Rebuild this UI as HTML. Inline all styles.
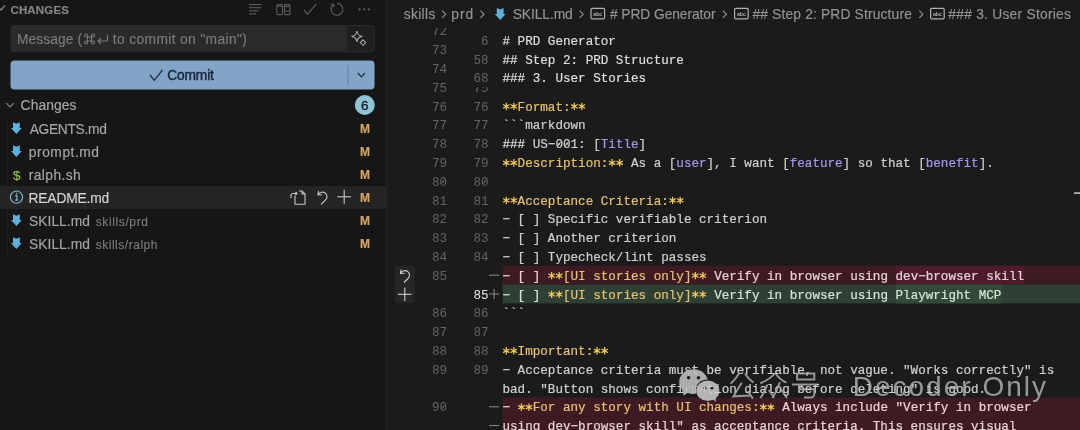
<!DOCTYPE html>
<html><head><meta charset="utf-8"><style>
*{margin:0;padding:0;box-sizing:border-box}
html,body{width:1080px;height:430px;overflow:hidden;background:#1b1b1b}
body{position:relative;font-family:"Liberation Sans",sans-serif}
.a{position:absolute}
svg{position:absolute;left:0;top:0;overflow:visible}
svg text{font-family:"Liberation Sans",sans-serif;white-space:pre}
svg text.m{font-family:"Liberation Mono",monospace;font-size:12.6px}
</style></head><body>

<svg width="1080" height="430">
<defs><clipPath id="cc"><rect x="387" y="28" width="693" height="402"/></clipPath></defs>
<rect x="0" y="0" width="386" height="430" fill="#161616"/>
<rect x="386" y="0" width="1" height="430" fill="#252525"/>
<polyline points="-3,5.5 1,10 5,5.5" fill="none" stroke="#8a8a8a" stroke-width="1.2"/>
<g stroke="#5e5e5e" stroke-width="1.1"><line x1="249" y1="4.6" x2="261.5" y2="4.6"/><line x1="249" y1="7.7" x2="261.5" y2="7.7"/><line x1="249" y1="10.8" x2="258.5" y2="10.8"/><line x1="249" y1="13.9" x2="256" y2="13.9"/></g>
<g fill="none" stroke="#5e5e5e" stroke-width="1.05"><rect x="276.8" y="4.6" width="5.6" height="10" rx="1"/><line x1="276.8" y1="6.2" x2="282.4" y2="6.2"/><rect x="284.4" y="4.6" width="5.6" height="10" rx="1"/><line x1="284.4" y1="6.6" x2="290" y2="6.6"/><line x1="284.4" y1="11" x2="290" y2="11"/></g>
<polyline points="303.8,9.6 307.4,14.2 316.3,4.2" fill="none" stroke="#5e5e5e" stroke-width="1.15"/>
<path d="M333.4,4.6 A5.9,5.9 0 1 0 337,3.4" fill="none" stroke="#5e5e5e" stroke-width="1.15"/><polyline points="330.8,4.2 333.6,4.4 334.2,7.2" fill="none" stroke="#5e5e5e" stroke-width="1.15"/>
<g fill="#5e5e5e"><circle cx="359.6" cy="9.4" r="1.1"/><circle cx="364.2" cy="9.4" r="1.1"/><circle cx="368.8" cy="9.4" r="1.1"/></g>
<rect x="10.5" y="25" width="364" height="27.3" rx="4" fill="#2a2a2a"/>
<path d="M346.5,25.5 L370.5,25.5 A3.5,3.5 0 0 1 374,29 L374,48.3 A3.5,3.5 0 0 1 370.5,51.8 L346.5,51.8 Z" fill="#1f1f1f" stroke="#2a2a2a" stroke-width="1"/>
<path d="M87.5,37 L91.5,37 L91.5,41 L87.5,41 Z M87.5,37 L87.5,35.5 A1.5,1.5 0 1 0 86,37 L87.5,37 M91.5,37 L93,37 A1.5,1.5 0 1 0 91.5,35.5 L91.5,37 M91.5,41 L91.5,42.5 A1.5,1.5 0 1 0 93,41 L91.5,41 M87.5,41 L86,41 A1.5,1.5 0 1 0 87.5,42.5 L87.5,41" fill="none" stroke="#7a7a7a" stroke-width="1.1"/>
<path d="M107.5,34.5 L107.5,39.5 A1.5,1.5 0 0 1 106,41 L98,41 M101,38 L98,41 L101,44" fill="none" stroke="#7a7a7a" stroke-width="1.2"/>
<path d="M356.9,31 Q357.6,35.7 362.3,36.4 Q357.6,37.1 356.9,41.8 Q356.2,37.1 351.5,36.4 Q356.2,35.7 356.9,31 Z" fill="none" stroke="#a8a8a8" stroke-width="1.1"/><path d="M363,39.9 L365.7,42.6 L363,45.3 L360.3,42.6 Z" fill="none" stroke="#a8a8a8" stroke-width="1.1"/>
<rect x="10.5" y="60.6" width="364" height="28.9" rx="4" fill="#82a4c6"/>
<rect x="347.6" y="65" width="1" height="20" fill="#62809e"/>
<polyline points="357.8,73 361.4,76.8 365,73" fill="none" stroke="#1d2b3a" stroke-width="1.2"/>
<polyline points="150,75 154.3,80.3 162.5,70" fill="none" stroke="#1b2a3a" stroke-width="1.25"/>
<polyline points="6.3,103 10,107 13.7,103" fill="none" stroke="#9a9a9a" stroke-width="1.1"/>
<circle cx="364.8" cy="105" r="10" fill="#8fc4d5"/>
<rect x="7" y="117" width="1" height="138" fill="#212121"/>
<rect x="0" y="186" width="386" height="23" fill="#242424"/>
<polygon points="13.00,122.20 16.40,123.70 19.80,122.20 19.80,128.10 21.80,128.10 16.40,134.10 11.00,128.10 13.00,128.10" fill="#5fb0dc"/>
<polygon points="13.00,145.20 16.40,146.70 19.80,145.20 19.80,151.10 21.80,151.10 16.40,157.10 11.00,151.10 13.00,151.10" fill="#5fb0dc"/>
<circle cx="16.45" cy="197.1" r="6.1" fill="none" stroke="#80b6cc" stroke-width="1.15"/><path d="M15.2,195.6 L16.9,195.6 L16.9,200.2 M15.2,200.2 L18.2,200.2" fill="none" stroke="#80b6cc" stroke-width="1.2"/><circle cx="16.6" cy="193.6" r="0.9" fill="#80b6cc"/>
<polygon points="13.00,214.20 16.40,215.70 19.80,214.20 19.80,220.10 21.80,220.10 16.40,226.10 11.00,220.10 13.00,220.10" fill="#5fb0dc"/>
<polygon points="13.00,237.20 16.40,238.70 19.80,237.20 19.80,243.10 21.80,243.10 16.40,249.10 11.00,243.10 13.00,243.10" fill="#5fb0dc"/>
<g fill="none" stroke="#c8c8c8" stroke-width="1.1"><path d="M295,195.5 L295,204.3 L305,204.3 L305,194 L302,191 L299,191"/><path d="M302,191 L302,194 L305,194"/><path d="M291,198 L291,195.5 A2,2 0 0 1 293,193.5 L297,193.5 M295.5,192 L297,193.5 L295.5,195"/></g>
<path d="M318.5,191 L318,195 L322,194.8 M318.2,194.8 A4.6,4.6 0 1 1 325,200.5 L321,204.3" fill="none" stroke="#c8c8c8" stroke-width="1.1"/>
<g stroke="#c8c8c8" stroke-width="1.1"><line x1="344.2" y1="189.8" x2="344.2" y2="203.8"/><line x1="337.3" y1="196.8" x2="351" y2="196.8"/></g>
<polyline points="442.1,10.6 445.7,14.2 442.1,17.8" fill="none" stroke="#949494" stroke-width="1.1"/>
<polyline points="480.40000000000003,10.6 484.0,14.2 480.40000000000003,17.8" fill="none" stroke="#949494" stroke-width="1.1"/>
<polygon points="496.80,8.10 500.20,9.60 503.60,8.10 503.60,14.00 505.60,14.00 500.20,20.00 494.80,14.00 496.80,14.00" fill="#5fb0dc"/>
<polyline points="579.6,10.6 583.2,14.2 579.6,17.8" fill="none" stroke="#949494" stroke-width="1.1"/>
<rect x="591.0" y="8.3" width="13.6" height="10.6" rx="1.2" fill="none" stroke="#b0b0b0" stroke-width="1.2"/>
<polyline points="722.8000000000001,10.6 726.4000000000001,14.2 722.8000000000001,17.8" fill="none" stroke="#949494" stroke-width="1.1"/>
<rect x="734.6" y="8.3" width="13.6" height="10.6" rx="1.2" fill="none" stroke="#b0b0b0" stroke-width="1.2"/>
<polyline points="919.3000000000001,10.6 922.9000000000001,14.2 919.3000000000001,17.8" fill="none" stroke="#949494" stroke-width="1.1"/>
<rect x="930.6" y="8.3" width="13.6" height="10.6" rx="1.2" fill="none" stroke="#b0b0b0" stroke-width="1.2"/>
<text x="10.45" y="13.7" font-size="11.5" font-weight="700" fill="#858585" letter-spacing="0.158"  stroke="#858585" stroke-width="0.15">CHANGES</text>
<text x="16.95" y="44" font-size="13.8" font-weight="400" fill="#7a7a7a" letter-spacing="0.088"  stroke="#7a7a7a" stroke-width="0.15">Message (</text>
<text x="112.80" y="44" font-size="13.8" font-weight="400" fill="#7a7a7a" letter-spacing="0.363"  stroke="#7a7a7a" stroke-width="0.15">to commit on "main")</text>
<text x="167.30" y="79.9" font-size="13.8" font-weight="400" fill="#15243a" letter-spacing="-0.190" stroke="#15243a" stroke-width="0.4">Commit</text>
<text x="20.60" y="110.2" font-size="13.8" font-weight="400" fill="#a8a8a8" letter-spacing="0.092"  stroke="#a8a8a8" stroke-width="0.15">Changes</text>
<text x="364.8" y="109.8" font-size="13.5" fill="#141d26" stroke="#141d26" stroke-width="0.3" text-anchor="middle">6</text>
<text x="29.65" y="133.7" font-size="13.8" font-weight="400" fill="#a6a6a6" letter-spacing="-0.312"  stroke="#a6a6a6" stroke-width="0.15">AGENTS.md</text>
<text x="359.90" y="132.9" font-size="12" font-weight="700" fill="#d7a65f" letter-spacing="0.000"  stroke="#d7a65f" stroke-width="0.15">M</text>
<text x="28.80" y="156.7" font-size="13.8" font-weight="400" fill="#a6a6a6" letter-spacing="0.538"  stroke="#a6a6a6" stroke-width="0.15">prompt.md</text>
<text x="359.90" y="155.9" font-size="12" font-weight="700" fill="#d7a65f" letter-spacing="0.000"  stroke="#d7a65f" stroke-width="0.15">M</text>
<text x="28.80" y="179.7" font-size="13.8" font-weight="400" fill="#a6a6a6" letter-spacing="0.400"  stroke="#a6a6a6" stroke-width="0.15">ralph.sh</text>
<text x="359.90" y="178.9" font-size="12" font-weight="700" fill="#d7a65f" letter-spacing="0.000"  stroke="#d7a65f" stroke-width="0.15">M</text>
<text x="13.05" y="179.8" font-size="13.5" font-weight="400" fill="#8ec24c" letter-spacing="0.000" stroke="#8ec24c" stroke-width="0.15">$</text>
<text x="28.55" y="202.7" font-size="13.8" font-weight="400" fill="#d4d4d4" letter-spacing="-0.175"  stroke="#d4d4d4" stroke-width="0.15">README.md</text>
<text x="359.90" y="201.9" font-size="12" font-weight="700" fill="#d7a65f" letter-spacing="0.000"  stroke="#d7a65f" stroke-width="0.15">M</text>
<text x="29.05" y="225.7" font-size="13.8" font-weight="400" fill="#a6a6a6" letter-spacing="0.036"  stroke="#a6a6a6" stroke-width="0.15">SKILL.md</text>
<text x="95.65" y="225.5" font-size="12" font-weight="400" fill="#7a7a7a" letter-spacing="0.628"  stroke="#7a7a7a" stroke-width="0.15">skills/prd</text>
<text x="359.90" y="224.9" font-size="12" font-weight="700" fill="#d7a65f" letter-spacing="0.000"  stroke="#d7a65f" stroke-width="0.15">M</text>
<text x="29.05" y="248.7" font-size="13.8" font-weight="400" fill="#a6a6a6" letter-spacing="0.036"  stroke="#a6a6a6" stroke-width="0.15">SKILL.md</text>
<text x="95.65" y="248.5" font-size="12" font-weight="400" fill="#7a7a7a" letter-spacing="0.527"  stroke="#7a7a7a" stroke-width="0.15">skills/ralph</text>
<text x="359.90" y="247.9" font-size="12" font-weight="700" fill="#d7a65f" letter-spacing="0.000"  stroke="#d7a65f" stroke-width="0.15">M</text>
<text x="403.70" y="19.3" font-size="13.8" font-weight="400" fill="#949494" letter-spacing="0.340"  stroke="#949494" stroke-width="0.15">skills</text>
<text x="451.30" y="19.3" font-size="13.8" font-weight="400" fill="#949494" letter-spacing="0.925"  stroke="#949494" stroke-width="0.15">prd</text>
<text x="512.65" y="19.3" font-size="13.8" font-weight="400" fill="#949494" letter-spacing="-0.064"  stroke="#949494" stroke-width="0.15">SKILL.md</text>
<text x="597.8" y="15.6" font-size="5.2" font-weight="700" fill="#b0b0b0" text-anchor="middle">abc</text>
<text x="609.95" y="19.3" font-size="13.8" font-weight="400" fill="#949494" letter-spacing="-0.071"  stroke="#949494" stroke-width="0.15"># PRD Generator</text>
<text x="741.4" y="15.6" font-size="5.2" font-weight="700" fill="#b0b0b0" text-anchor="middle">abc</text>
<text x="752.45" y="19.3" font-size="13.8" font-weight="400" fill="#949494" letter-spacing="0.163"  stroke="#949494" stroke-width="0.15">## Step 2: PRD Structure</text>
<text x="937.4" y="15.6" font-size="5.2" font-weight="700" fill="#b0b0b0" text-anchor="middle">abc</text>
<text x="948.35" y="19.3" font-size="13.8" font-weight="400" fill="#949494" letter-spacing="0.247"  stroke="#949494" stroke-width="0.15">### 3. User Stories</text>
<g clip-path="url(#cc)">
<text class="m" x="447" y="35.30" fill="#636363" text-anchor="end">72</text>
<text class="m" x="447" y="54.10" fill="#636363" text-anchor="end">73</text>
<text class="m" x="447" y="72.90" fill="#636363" text-anchor="end">74</text>
<text class="m" x="447" y="91.70" fill="#636363" text-anchor="end">75</text>
<text class="m" x="488.5" y="91.70" fill="#636363" text-anchor="end">75</text>
<text class="m" x="447" y="110.50" fill="#636363" text-anchor="end">76</text>
<text class="m" x="488.5" y="110.50" fill="#636363" text-anchor="end">76</text>
<path d="M506.28,102.70 L506.28,110.10 M503.08,104.55 L509.48,108.25 M509.48,104.55 L503.08,108.25 " stroke="#f2c95a" stroke-width="1.25" fill="none"/>
<path d="M513.84,102.70 L513.84,110.10 M510.64,104.55 L517.05,108.25 M517.05,104.55 L510.64,108.25 " stroke="#f2c95a" stroke-width="1.25" fill="none"/>
<path d="M574.33,102.70 L574.33,110.10 M571.13,104.55 L577.54,108.25 M577.54,104.55 L571.13,108.25 " stroke="#f2c95a" stroke-width="1.25" fill="none"/>
<path d="M581.89,102.70 L581.89,110.10 M578.69,104.55 L585.10,108.25 M585.10,104.55 L578.69,108.25 " stroke="#f2c95a" stroke-width="1.25" fill="none"/>
<text class="m" x="502.5" y="110.50"><tspan fill="#e6c070" stroke="#e6c070" stroke-width="0.2">  Format:  </tspan></text>
<text class="m" x="447" y="129.30" fill="#636363" text-anchor="end">77</text>
<text class="m" x="488.5" y="129.30" fill="#636363" text-anchor="end">77</text>
<text class="m" x="502.5" y="129.30"><tspan fill="#d0d0d0" stroke="#d0d0d0" stroke-width="0.2">```markdown</tspan></text>
<text class="m" x="447" y="148.10" fill="#636363" text-anchor="end">78</text>
<text class="m" x="488.5" y="148.10" fill="#636363" text-anchor="end">78</text>
<path d="M560.71,141.70 L557.71,146.10" stroke="#d0d0d0" stroke-width="1"/>
<path d="M568.27,141.70 L565.27,146.10" stroke="#d0d0d0" stroke-width="1"/>
<text class="m" x="502.5" y="148.10"><tspan fill="#dedede" stroke="#dedede" stroke-width="0.2">### </tspan><tspan fill="#d0d0d0" stroke="#d0d0d0" stroke-width="0.2">US−001: [</tspan><tspan fill="#a198ea" stroke="#a198ea" stroke-width="0.2">Title</tspan><tspan fill="#d0d0d0" stroke="#d0d0d0" stroke-width="0.2">]</tspan></text>
<text class="m" x="447" y="166.90" fill="#636363" text-anchor="end">79</text>
<text class="m" x="488.5" y="166.90" fill="#636363" text-anchor="end">79</text>
<path d="M506.28,159.10 L506.28,166.50 M503.08,160.95 L509.48,164.65 M509.48,160.95 L503.08,164.65 " stroke="#f2c95a" stroke-width="1.25" fill="none"/>
<path d="M513.84,159.10 L513.84,166.50 M510.64,160.95 L517.05,164.65 M517.05,160.95 L510.64,164.65 " stroke="#f2c95a" stroke-width="1.25" fill="none"/>
<path d="M612.14,159.10 L612.14,166.50 M608.93,160.95 L615.34,164.65 M615.34,160.95 L608.93,164.65 " stroke="#f2c95a" stroke-width="1.25" fill="none"/>
<path d="M619.70,159.10 L619.70,166.50 M616.50,160.95 L622.90,164.65 M622.90,160.95 L616.50,164.65 " stroke="#f2c95a" stroke-width="1.25" fill="none"/>
<text class="m" x="502.5" y="166.90"><tspan fill="#e6c070" stroke="#e6c070" stroke-width="0.2">  Description:  </tspan><tspan fill="#d0d0d0" stroke="#d0d0d0" stroke-width="0.2"> As a [</tspan><tspan fill="#a198ea" stroke="#a198ea" stroke-width="0.2">user</tspan><tspan fill="#d0d0d0" stroke="#d0d0d0" stroke-width="0.2">], I want [</tspan><tspan fill="#a198ea" stroke="#a198ea" stroke-width="0.2">feature</tspan><tspan fill="#d0d0d0" stroke="#d0d0d0" stroke-width="0.2">] so that [</tspan><tspan fill="#a198ea" stroke="#a198ea" stroke-width="0.2">benefit</tspan><tspan fill="#d0d0d0" stroke="#d0d0d0" stroke-width="0.2">].</tspan></text>
<text class="m" x="447" y="185.70" fill="#636363" text-anchor="end">80</text>
<path d="M444.72,179.30 L441.72,183.70" stroke="#636363" stroke-width="1"/>
<text class="m" x="488.5" y="185.70" fill="#636363" text-anchor="end">80</text>
<path d="M486.22,179.30 L483.22,183.70" stroke="#636363" stroke-width="1"/>
<text class="m" x="447" y="204.50" fill="#636363" text-anchor="end">81</text>
<text class="m" x="488.5" y="204.50" fill="#636363" text-anchor="end">81</text>
<path d="M506.28,196.70 L506.28,204.10 M503.08,198.55 L509.48,202.25 M509.48,198.55 L503.08,202.25 " stroke="#f2c95a" stroke-width="1.25" fill="none"/>
<path d="M513.84,196.70 L513.84,204.10 M510.64,198.55 L517.05,202.25 M517.05,198.55 L510.64,202.25 " stroke="#f2c95a" stroke-width="1.25" fill="none"/>
<path d="M672.63,196.70 L672.63,204.10 M669.42,198.55 L675.83,202.25 M675.83,198.55 L669.42,202.25 " stroke="#f2c95a" stroke-width="1.25" fill="none"/>
<path d="M680.19,196.70 L680.19,204.10 M676.99,198.55 L683.39,202.25 M683.39,198.55 L676.99,202.25 " stroke="#f2c95a" stroke-width="1.25" fill="none"/>
<text class="m" x="502.5" y="204.50"><tspan fill="#e6c070" stroke="#e6c070" stroke-width="0.2">  Acceptance Criteria:  </tspan></text>
<text class="m" x="447" y="223.30" fill="#636363" text-anchor="end">82</text>
<text class="m" x="488.5" y="223.30" fill="#636363" text-anchor="end">82</text>
<text class="m" x="502.5" y="223.30"><tspan fill="#d0d0d0" stroke="#d0d0d0" stroke-width="0.2">− [ ] Specific verifiable criterion</tspan></text>
<text class="m" x="447" y="242.10" fill="#636363" text-anchor="end">83</text>
<text class="m" x="488.5" y="242.10" fill="#636363" text-anchor="end">83</text>
<text class="m" x="502.5" y="242.10"><tspan fill="#d0d0d0" stroke="#d0d0d0" stroke-width="0.2">− [ ] Another criterion</tspan></text>
<text class="m" x="447" y="260.90" fill="#636363" text-anchor="end">84</text>
<text class="m" x="488.5" y="260.90" fill="#636363" text-anchor="end">84</text>
<text class="m" x="502.5" y="260.90"><tspan fill="#d0d0d0" stroke="#d0d0d0" stroke-width="0.2">− [ ] Typecheck/lint passes</tspan></text>
<rect x="502.5" y="265.80" width="600" height="18.8" fill="#3e1a23"/>
<rect x="895.69" y="265.80" width="128.54" height="18.8" fill="#4e1b2b"/>
<text class="m" x="447" y="279.70" fill="#636363" text-anchor="end">85</text>
<rect x="489" y="274.70" width="10.2" height="1" fill="#8c8c8c"/>
<path d="M551.65,271.90 L551.65,279.30 M548.44,273.75 L554.85,277.45 M554.85,273.75 L548.44,277.45 " stroke="#f2c95a" stroke-width="1.25" fill="none"/>
<path d="M559.21,271.90 L559.21,279.30 M556.01,273.75 L562.41,277.45 M562.41,273.75 L556.01,277.45 " stroke="#f2c95a" stroke-width="1.25" fill="none"/>
<path d="M695.31,271.90 L695.31,279.30 M692.11,273.75 L698.52,277.45 M698.52,273.75 L692.11,277.45 " stroke="#f2c95a" stroke-width="1.25" fill="none"/>
<path d="M702.87,271.90 L702.87,279.30 M699.67,273.75 L706.08,277.45 M706.08,273.75 L699.67,277.45 " stroke="#f2c95a" stroke-width="1.25" fill="none"/>
<text class="m" x="502.5" y="279.70"><tspan fill="#ecd2d8" stroke="#ecd2d8" stroke-width="0.2">− [ ] </tspan><tspan fill="#e6c070" stroke="#e6c070" stroke-width="0.2">  [UI stories only]  </tspan><tspan fill="#ecd2d8" stroke="#ecd2d8" stroke-width="0.2"> Verify in browser using dev−browser skill</tspan></text>
<rect x="502.5" y="284.60" width="600" height="18.8" fill="#2e3f33"/>
<rect x="895.69" y="284.60" width="105.86" height="18.8" fill="#35493b"/>
<text class="m" x="488.5" y="298.50" fill="#e4e4e4" text-anchor="end">85</text>
<rect x="489" y="293.50" width="10.2" height="1" fill="#8c8c8c"/>
<rect x="493.6" y="288.90" width="1" height="10.2" fill="#8c8c8c"/>
<path d="M551.65,290.70 L551.65,298.10 M548.44,292.55 L554.85,296.25 M554.85,292.55 L548.44,296.25 " stroke="#f2c95a" stroke-width="1.25" fill="none"/>
<path d="M559.21,290.70 L559.21,298.10 M556.01,292.55 L562.41,296.25 M562.41,292.55 L556.01,296.25 " stroke="#f2c95a" stroke-width="1.25" fill="none"/>
<path d="M695.31,290.70 L695.31,298.10 M692.11,292.55 L698.52,296.25 M698.52,292.55 L692.11,296.25 " stroke="#f2c95a" stroke-width="1.25" fill="none"/>
<path d="M702.87,290.70 L702.87,298.10 M699.67,292.55 L706.08,296.25 M706.08,292.55 L699.67,296.25 " stroke="#f2c95a" stroke-width="1.25" fill="none"/>
<text class="m" x="502.5" y="298.50"><tspan fill="#d2e6d8" stroke="#d2e6d8" stroke-width="0.2">− [ ] </tspan><tspan fill="#e6c070" stroke="#e6c070" stroke-width="0.2">  [UI stories only]  </tspan><tspan fill="#d2e6d8" stroke="#d2e6d8" stroke-width="0.2"> Verify in browser using Playwright MCP</tspan></text>
<text class="m" x="447" y="317.30" fill="#636363" text-anchor="end">86</text>
<text class="m" x="488.5" y="317.30" fill="#636363" text-anchor="end">86</text>
<text class="m" x="502.5" y="317.30"><tspan fill="#d0d0d0" stroke="#d0d0d0" stroke-width="0.2">```</tspan></text>
<text class="m" x="447" y="336.10" fill="#636363" text-anchor="end">87</text>
<text class="m" x="488.5" y="336.10" fill="#636363" text-anchor="end">87</text>
<text class="m" x="447" y="354.90" fill="#636363" text-anchor="end">88</text>
<text class="m" x="488.5" y="354.90" fill="#636363" text-anchor="end">88</text>
<path d="M506.28,347.10 L506.28,354.50 M503.08,348.95 L509.48,352.65 M509.48,348.95 L503.08,352.65 " stroke="#f2c95a" stroke-width="1.25" fill="none"/>
<path d="M513.84,347.10 L513.84,354.50 M510.64,348.95 L517.05,352.65 M517.05,348.95 L510.64,352.65 " stroke="#f2c95a" stroke-width="1.25" fill="none"/>
<path d="M597.02,347.10 L597.02,354.50 M593.81,348.95 L600.22,352.65 M600.22,348.95 L593.81,352.65 " stroke="#f2c95a" stroke-width="1.25" fill="none"/>
<path d="M604.58,347.10 L604.58,354.50 M601.37,348.95 L607.78,352.65 M607.78,348.95 L601.37,352.65 " stroke="#f2c95a" stroke-width="1.25" fill="none"/>
<text class="m" x="502.5" y="354.90"><tspan fill="#e6c070" stroke="#e6c070" stroke-width="0.2">  Important:  </tspan></text>
<text class="m" x="447" y="373.70" fill="#636363" text-anchor="end">89</text>
<text class="m" x="488.5" y="373.70" fill="#636363" text-anchor="end">89</text>
<text class="m" x="502.5" y="373.70"><tspan fill="#d0d0d0" stroke="#d0d0d0" stroke-width="0.2">− Acceptance criteria must be verifiable, not vague. "Works correctly" is</tspan></text>
<text class="m" x="502.5" y="392.50"><tspan fill="#d0d0d0" stroke="#d0d0d0" stroke-width="0.2">bad. "Button shows confirmation dialog before deleting" is good.</tspan></text>
<rect x="502.5" y="397.40" width="600" height="18.8" fill="#3e1a23"/>
<text class="m" x="447" y="411.30" fill="#636363" text-anchor="end">90</text>
<path d="M444.72,404.90 L441.72,409.30" stroke="#636363" stroke-width="1"/>
<rect x="489" y="406.30" width="10.2" height="1" fill="#8c8c8c"/>
<path d="M521.40,403.50 L521.40,410.90 M518.20,405.35 L524.61,409.05 M524.61,405.35 L518.20,409.05 " stroke="#f2c95a" stroke-width="1.25" fill="none"/>
<path d="M528.96,403.50 L528.96,410.90 M525.76,405.35 L532.17,409.05 M532.17,405.35 L525.76,409.05 " stroke="#f2c95a" stroke-width="1.25" fill="none"/>
<path d="M763.36,403.50 L763.36,410.90 M760.16,405.35 L766.57,409.05 M766.57,405.35 L760.16,409.05 " stroke="#f2c95a" stroke-width="1.25" fill="none"/>
<path d="M770.93,403.50 L770.93,410.90 M767.72,405.35 L774.13,409.05 M774.13,405.35 L767.72,409.05 " stroke="#f2c95a" stroke-width="1.25" fill="none"/>
<text class="m" x="502.5" y="411.30"><tspan fill="#ecd2d8" stroke="#ecd2d8" stroke-width="0.2">− </tspan><tspan fill="#e6c070" stroke="#e6c070" stroke-width="0.2">  For any story with UI changes:  </tspan><tspan fill="#ecd2d8" stroke="#ecd2d8" stroke-width="0.2"> Always include "Verify in browser</tspan></text>
<rect x="502.5" y="416.20" width="600" height="18.8" fill="#3e1a23"/>
<rect x="489" y="425.10" width="10.2" height="1" fill="#8c8c8c"/>
<text class="m" x="502.5" y="430.10"><tspan fill="#ecd2d8" stroke="#ecd2d8" stroke-width="0.2">using dev−browser skill" as acceptance criteria. This ensures visual</tspan></text>
<rect x="460" y="30.9" width="620" height="56.400000000000006" fill="#1b1b1b"/>
<text class="m" x="488.5" y="44.80" fill="#636363" text-anchor="end">6</text>
<text class="m" x="502.5" y="44.80"><tspan fill="#dedede" stroke="#dedede" stroke-width="0.2"># PRD Generator</tspan></text>
<text class="m" x="488.5" y="63.60" fill="#636363" text-anchor="end">58</text>
<text class="m" x="502.5" y="63.60"><tspan fill="#dedede" stroke="#dedede" stroke-width="0.2">## Step 2: PRD Structure</tspan></text>
<text class="m" x="488.5" y="82.40" fill="#636363" text-anchor="end">68</text>
<text class="m" x="502.5" y="82.40"><tspan fill="#dedede" stroke="#dedede" stroke-width="0.2">### 3. User Stories</tspan></text>
</g>
<rect x="394.8" y="265.7" width="20" height="37.4" rx="4" fill="#262626"/>
<path d="M401,269.5 L400.5,273.5 L404.5,273.3 M400.7,273.3 A4.6,4.6 0 1 1 407.5,279 L404,282.5" fill="none" stroke="#d0d0d0" stroke-width="1.1"/>
<g stroke="#d0d0d0" stroke-width="1.1"><line x1="404.8" y1="287.5" x2="404.8" y2="301"/><line x1="398" y1="294.3" x2="411.5" y2="294.3"/></g>
<rect x="1074" y="192.3" width="6" height="1.6" fill="#bdbdbd"/>
<g style="mix-blend-mode:lighten">
<ellipse cx="693.5" cy="381.6" rx="14.3" ry="12.3" fill="#acacac"/>
<path d="M681.5,388 L683.5,395.5 L690,391.5 Z" fill="#acacac"/>
<circle cx="688.6" cy="377.7" r="1.7" fill="#181818"/><circle cx="698.5" cy="377.7" r="1.7" fill="#181818"/>
<ellipse cx="707.8" cy="390.8" rx="12.6" ry="11.2" fill="#161616"/>
<ellipse cx="707.8" cy="390.8" rx="11.6" ry="10.2" fill="#b4b4b4"/>
<path d="M712,398 L715.5,402 L716,396 Z" fill="#b4b4b4"/>
<circle cx="704.9" cy="388.2" r="1.4" fill="#181818"/><circle cx="711.9" cy="388.2" r="1.4" fill="#181818"/>
<g fill="none" stroke="#969696" stroke-width="2" stroke-linecap="butt" stroke-linejoin="miter">
<path d="M739,373.4 Q736,379 730.6,383.7 M745,373.4 Q748,378.5 753.5,382.5 M741.7,382.7 L733.4,396.3 L750.5,395.5 M747.8,391.2 L752.9,398.6"/>
<path d="M775.2,373 Q770,379.5 760.3,383.2 M775.2,373 Q779.5,379.5 786.4,382.7 M767.3,384.6 Q765,392 760.3,398 M768.7,390 L774.3,397.6 M779.9,382.3 Q777,391 772.4,398 M780.8,389 L786.9,398"/>
<path d="M797.1,373.4 L814.3,373.4 L814.3,379.5 L797.1,379.5 Z M792,384.6 L818,384.6 M802.2,384.6 L799.4,389.3 L814.3,389.3 L814.3,394.5 Q814,397.4 810,397.6 L804,397.6"/>
</g>

<text x="852.70" y="396.4" font-size="28" fill="#989898" letter-spacing="2.014">Decoder Only</text>
</g>
</svg>
</body></html>
